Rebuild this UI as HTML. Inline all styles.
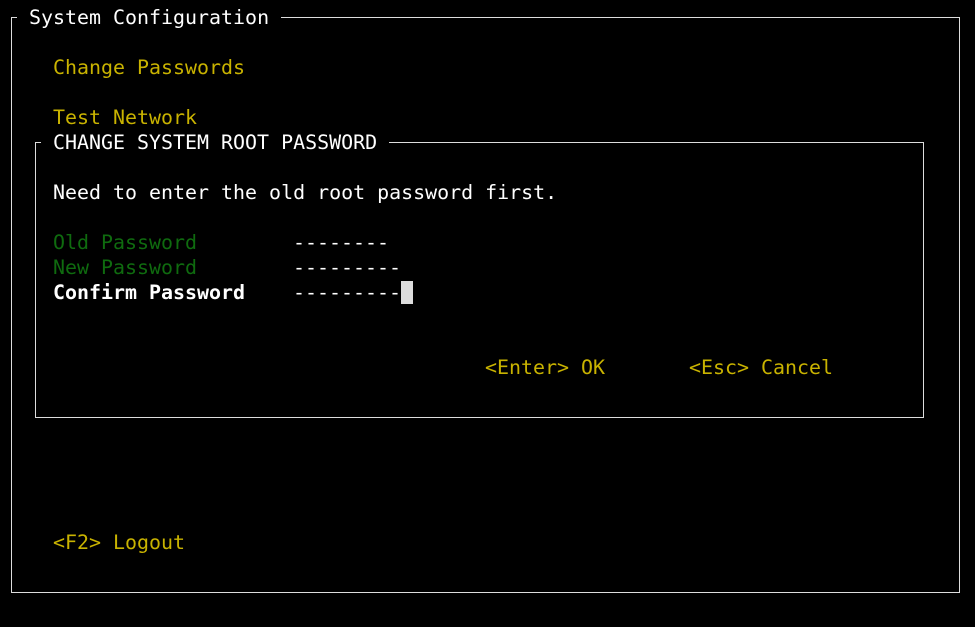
<!DOCTYPE html><html><head><style>
body{margin:0;background:#000;width:975px;height:627px;overflow:hidden;position:relative;font-family:"DejaVu Sans Mono","Liberation Mono",monospace;font-size:19.95px;}
.t{position:absolute;line-height:25px;white-space:pre;height:25px}
.y{color:#c9b300}.g{color:#0f6b0f}.w{color:#fff}.b{font-weight:bold}
.box{position:absolute;border:1px solid #ddd}
</style></head><body>
<div class="box" style="left:11px;top:17px;width:947px;height:574px"></div>
<div class="t w" style="left:17px;top:5px;background:#000;padding:0 12px">System Configuration</div>
<div class="t y" style="left:53px;top:55px">Change Passwords</div>
<div class="t y" style="left:53px;top:105px">Test Network</div>
<div class="box" style="left:35px;top:142px;width:887px;height:274px"></div>
<div class="t w" style="left:41px;top:130px;background:#000;padding:0 12px">CHANGE SYSTEM ROOT PASSWORD</div>
<div class="t w" style="left:53px;top:180px">Need to enter the old root password first.</div>
<div class="t g" style="left:53px;top:230px">Old Password</div>
<div class="t w" style="left:293px;top:230px">--------</div>
<div class="t g" style="left:53px;top:255px">New Password</div>
<div class="t w" style="left:293px;top:255px">---------</div>
<div class="t w b" style="left:53px;top:280px">Confirm Password</div>
<div class="t w" style="left:293px;top:280px">---------</div>
<div style="position:absolute;left:401px;top:281px;width:12px;height:23px;background:#ddd"></div>
<div class="t y" style="left:485px;top:355px">&lt;Enter&gt; OK</div>
<div class="t y" style="left:689px;top:355px">&lt;Esc&gt; Cancel</div>
<div class="t y" style="left:53px;top:530px">&lt;F2&gt; Logout</div>
</body></html>
